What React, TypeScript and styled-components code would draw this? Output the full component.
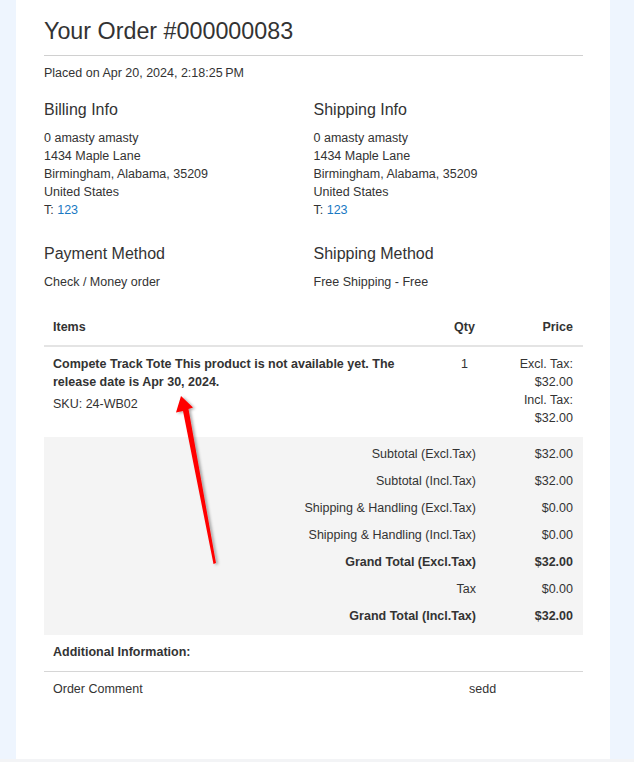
import React from 'react';
import styled, { createGlobalStyle } from 'styled-components';

const GlobalStyle = createGlobalStyle`
  html, body {
    margin: 0;
    padding: 0;
    background: #eef5fe;
  }
  body {
    font-family: "Liberation Sans", Arial, sans-serif;
    color: #333;
  }
`;

const Page = styled.div`
  display: flex;
  flex-direction: column;
  min-height: 762px;
`;

const Panel = styled.div`
  position: relative;
  background: #fff;
  margin: 0 24px 0 16px;
  padding: 18px 27px 0 28px;
  height: 759px;
  box-sizing: border-box;
`;

const Footer = styled.div`
  flex: 1;
  background: #f3f4f6;
`;

const Title = styled.h1`
  margin: 0;
  font-size: 23.3px;
  line-height: 26px;
  font-weight: 400;
  color: #333;
  padding-bottom: 11px;
  border-bottom: 1px solid #d0d0d0;
`;

const Placed = styled.p`
  margin: 8px 0 0;
  font-size: 12.5px;
  line-height: 18px;
`;

const InfoGrid = styled.div`
  display: grid;
  grid-template-columns: 1fr 1fr;
  margin-top: ${(p: { $top: number }) => p.$top}px;
`;

const Block = styled.div``;

const BlockTitle = styled.h3`
  margin: 0 0 9px;
  font-size: 16px;
  line-height: 20px;
  font-weight: 400;
  color: #333;
`;

const Line = styled.div`
  font-size: 12.5px;
  line-height: 18px;
`;

const Phone = styled.a`
  color: #1979c3;
  text-decoration: none;
`;

const Table = styled.table`
  width: 100%;
  border-collapse: collapse;
  table-layout: fixed;
  font-size: 12.5px;
  line-height: 18px;
  margin-top: ${(p: { $top: number }) => p.$top}px;
`;

const Th = styled.th<{ $align?: string }>`
  text-align: ${(p) => p.$align || 'left'};
  font-weight: 700;
  padding: 11px 10px 9px 9px;
  border-bottom: 2px solid #e4e4e4;
`;

const Td = styled.td<{ $align?: string }>`
  text-align: ${(p) => p.$align || 'left'};
  vertical-align: top;
  padding: 8px 10px 10px 9px;
`;

const ItemName = styled.p`
  margin: 0;
  font-weight: 700;
`;

const Sku = styled.p`
  margin: 4px 0 0;
`;

const Totals = styled.tbody`
  background: #f4f4f4;
  tr:first-child td { padding-top: 8px; }
  tr:last-child td { padding-bottom: 10px; }
`;

const TotalCell = styled.td<{ $strong?: boolean }>`
  text-align: right;
  padding: 4.5px 10px;
  font-weight: ${(p) => (p.$strong ? 700 : 400)};
`;

const InfoTh = styled.th`
  text-align: left;
  font-weight: 700;
  padding: 8px 10px 10px 9px;
  border-bottom: 1px solid #d6d6d6;
`;

const Arrow = styled.svg`
  position: absolute;
  left: -16px;
  top: 0;
  overflow: visible;
  pointer-events: none;
`;

const totals = [
  { label: 'Subtotal (Excl.Tax)', value: '$32.00' },
  { label: 'Subtotal (Incl.Tax)', value: '$32.00' },
  { label: 'Shipping & Handling (Excl.Tax)', value: '$0.00' },
  { label: 'Shipping & Handling (Incl.Tax)', value: '$0.00' },
  { label: 'Grand Total (Excl.Tax)', value: '$32.00', strong: true },
  { label: 'Tax', value: '$0.00' },
  { label: 'Grand Total (Incl.Tax)', value: '$32.00', strong: true },
];

const Address = ({ title }: { title: string }) => (
  <Block>
    <BlockTitle>{title}</BlockTitle>
    <Line>0 amasty amasty</Line>
    <Line>1434 Maple Lane</Line>
    <Line>Birmingham, Alabama, 35209</Line>
    <Line>United States</Line>
    <Line>
      T: <Phone href="#">123</Phone>
    </Line>
  </Block>
);

export default function App() {
  return (
    <Page>
      <GlobalStyle />
      <Panel>
        <Title>Your Order #000000083</Title>
        <Placed>Placed on Apr 20, 2024, 2:18:25{'\u202F'}PM</Placed>

        <InfoGrid $top={18}>
          <Address title="Billing Info" />
          <Address title="Shipping Info" />
        </InfoGrid>

        <InfoGrid $top={25}>
          <Block>
            <BlockTitle>Payment Method</BlockTitle>
            <Line>Check / Money order</Line>
          </Block>
          <Block>
            <BlockTitle>Shipping Method</BlockTitle>
            <Line>Free Shipping - Free</Line>
          </Block>
        </InfoGrid>

        <Table $top={16}>
          <colgroup>
            <col style={{ width: 400 }} />
            <col style={{ width: 42 }} />
            <col />
          </colgroup>
          <thead>
            <tr>
              <Th>Items</Th>
              <Th $align="center">Qty</Th>
              <Th $align="right">Price</Th>
            </tr>
          </thead>
          <tbody>
            <tr>
              <Td>
                <ItemName>
                  Compete Track Tote This product is not available yet. The release date is Apr 30, 2024.
                </ItemName>
                <Sku>SKU: 24-WB02</Sku>
              </Td>
              <Td $align="center">1</Td>
              <Td $align="right">
                Excl. Tax:
                <br />
                $32.00
                <br />
                Incl. Tax:
                <br />
                $32.00
              </Td>
            </tr>
          </tbody>
          <Totals>
            {totals.map((t) => (
              <tr key={t.label}>
                <TotalCell colSpan={2} $strong={t.strong}>
                  {t.label}
                </TotalCell>
                <TotalCell $strong={t.strong}>{t.value}</TotalCell>
              </tr>
            ))}
          </Totals>
        </Table>

        <Table $top={0}>
          <colgroup>
            <col style={{ width: 416 }} />
            <col />
          </colgroup>
          <thead>
            <tr>
              <InfoTh colSpan={2}>Additional Information:</InfoTh>
            </tr>
          </thead>
          <tbody>
            <tr>
              <Td>Order Comment</Td>
              <Td>sedd</Td>
            </tr>
          </tbody>
        </Table>

        <Arrow width="634" height="762" viewBox="0 0 634 762">
          <defs>
            <filter id="arrowShadow" x="-50%" y="-10%" width="200%" height="120%">
              <feDropShadow dx="2" dy="1" stdDeviation="1.5" floodColor="#000" floodOpacity="0.35" />
            </filter>
          </defs>
          <polygon
            points="181,396 193,407.5 188.5,409 216,563 213.5,564 183,411 176,412.5"
            fill="#ff0000"
            filter="url(#arrowShadow)"
          />
        </Arrow>
      </Panel>
      <Footer />
    </Page>
  );
}
